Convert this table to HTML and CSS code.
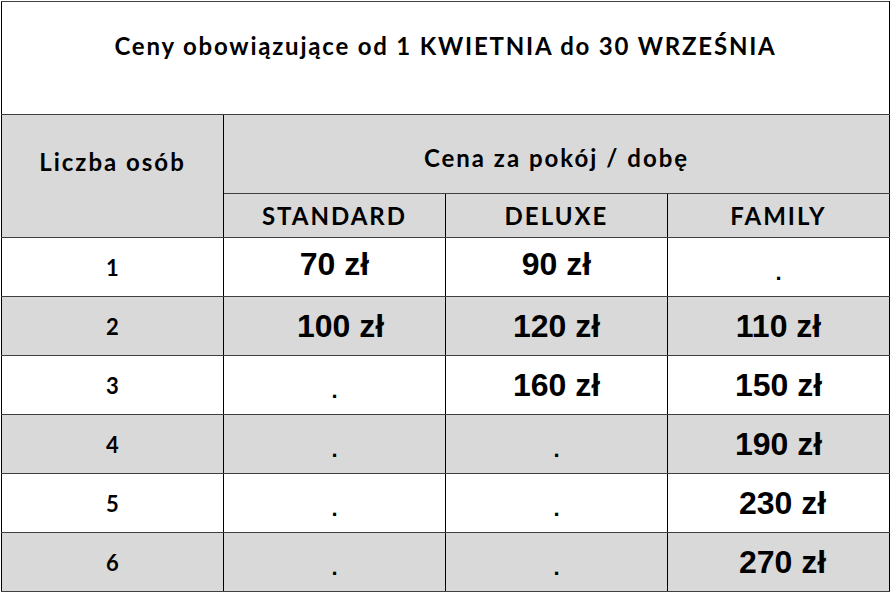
FILE: index.html
```html
<!DOCTYPE html>
<html lang="pl">
<head>
<meta charset="utf-8">
<title>Cennik</title>
<link rel="stylesheet" href="styles.css">
</head>
<body>
<table class="prices">
  <colgroup>
    <col class="c"><col class="c"><col class="c"><col class="c">
  </colgroup>
  <tr class="title-row">
    <td class="title" colspan="4">Ceny obowiązujące od 1 KWIETNIA do 30 WRZEŚNIA</td>
  </tr>
  <tr class="head1">
    <td class="head persons" rowspan="2">Liczba osób</td>
    <td class="head price-head" colspan="3">Cena za pokój / dobę</td>
  </tr>
  <tr class="head2">
    <td class="head type">STANDARD</td>
    <td class="head type">DELUXE</td>
    <td class="head type">FAMILY</td>
  </tr>
  <tr class="row r1">
    <td class="num">1</td>
    <td class="val up">70 zł</td>
    <td class="val up">90 zł</td>
    <td class="val"><span class="dot">.</span></td>
  </tr>
  <tr class="row shaded">
    <td class="num">2</td>
    <td class="val shift-more">100 zł</td>
    <td class="val">120 zł</td>
    <td class="val">110 zł</td>
  </tr>
  <tr class="row">
    <td class="num">3</td>
    <td class="val"><span class="dot">.</span></td>
    <td class="val">160 zł</td>
    <td class="val">150 zł</td>
  </tr>
  <tr class="row shaded">
    <td class="num">4</td>
    <td class="val"><span class="dot">.</span></td>
    <td class="val"><span class="dot">.</span></td>
    <td class="val">190 zł</td>
  </tr>
  <tr class="row">
    <td class="num">5</td>
    <td class="val"><span class="dot">.</span></td>
    <td class="val"><span class="dot">.</span></td>
    <td class="val shift">230 zł</td>
  </tr>
  <tr class="row shaded">
    <td class="num">6</td>
    <td class="val"><span class="dot">.</span></td>
    <td class="val"><span class="dot">.</span></td>
    <td class="val shift">270 zł</td>
  </tr>
</table>
</body>
</html>
```
FILE: styles.css
```css
html, body {
  margin: 0;
  padding: 0;
  background: #ffffff;
}

.prices {
  margin: 1px 0 0 1px;
  width: 889px;
  border-collapse: collapse;
  table-layout: fixed;
  font-family: Lato, "Liberation Sans", sans-serif;
  color: #000;
}

.prices .c {
  width: 222px;
}

.prices td {
  border-left: 1px solid #000;
  border-right: 1px solid #000;
  border-top: 1px solid #404040;
  border-bottom: 1px solid #404040;
  text-align: center;
  vertical-align: middle;
  padding: 0;
}

.title-row {
  height: 113px;
}

.prices .title {
  font-weight: 700;
  font-size: 24px;
  letter-spacing: 1.8px;
  padding-bottom: 26px;
}

.head1 {
  height: 79px;
}

.head2 {
  height: 44px;
}

.prices .head {
  background: #d9d9d9;
  font-weight: 700;
  font-size: 24px;
  letter-spacing: 2px;
}

.prices .persons {
  padding-bottom: 30px;
}

.prices .price-head {
  padding-top: 6px;
}

.row {
  height: 59px;
}

.shaded td {
  background: #d9d9d9;
}

.prices .num {
  font-weight: 700;
  font-size: 22px;
}

.prices .val {
  font-family: "Liberation Sans", Arial, sans-serif;
  font-weight: 700;
  font-size: 32px;
}

.prices .val.up {
  padding-bottom: 6px;
}

.prices .val.shift {
  padding-left: 8px;
}

.prices .val.shift-more {
  padding-left: 12px;
}

.dot {
  display: inline-block;
  font-size: 22px;
  padding-top: 14px;
}
```
